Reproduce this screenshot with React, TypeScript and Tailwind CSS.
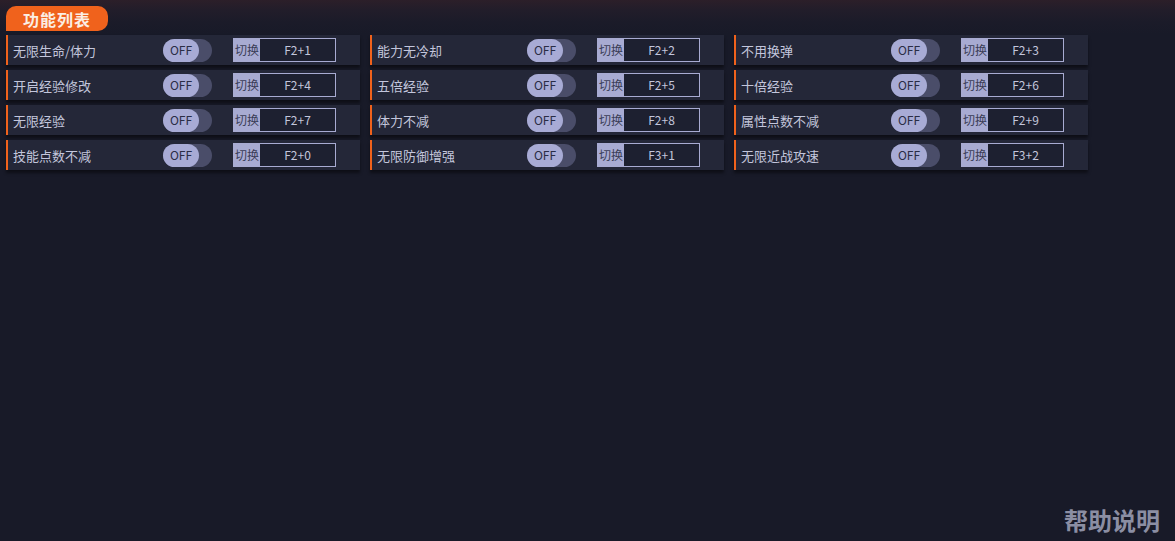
import React from "react";

const cheats = [
  { name: "无限生命/体力", key: "F2+1" },
  { name: "能力无冷却", key: "F2+2" },
  { name: "不用换弹", key: "F2+3" },
  { name: "开启经验修改", key: "F2+4" },
  { name: "五倍经验", key: "F2+5" },
  { name: "十倍经验", key: "F2+6" },
  { name: "无限经验", key: "F2+7" },
  { name: "体力不减", key: "F2+8" },
  { name: "属性点数不减", key: "F2+9" },
  { name: "技能点数不减", key: "F2+0" },
  { name: "无限防御增强", key: "F3+1" },
  { name: "无限近战攻速", key: "F3+2" },
];

const font = { fontFamily: '"Microsoft YaHei", "Noto Sans CJK SC", "Noto Sans", sans-serif' };

function CheatRow({ name, hotkey }: { name: string; hotkey: string }) {
  return (
    <div className="flex h-[30px] items-center border-l-2 border-[#f0621c] bg-[#242738] shadow-[0_3px_3px_rgba(0,0,0,0.45)]">
      <span className="w-[155px] pl-[5px] pt-[1px] text-[13px] text-[#c3c6dc]">{name}</span>
      {/* Toggle */}
      <div className="flex h-[23px] w-[49px] items-center rounded-full bg-[#4a4d69]">
        <div className="flex h-[23px] w-[36px] items-center justify-center rounded-full bg-[#a8abd5] text-[12px] text-[#2a2d45]">
          OFF
        </div>
      </div>
      {/* Hotkey */}
      <div className="ml-[21px] flex h-[24px] w-[103px] border border-[#a8abd2] bg-[#1d2030]">
        <span className="flex w-[26px] items-center justify-center bg-[#a8abd2] text-[12px] text-[#3a3d57]">
          切换
        </span>
        <span className="flex flex-1 items-center justify-center text-[12px] text-[#c3c6dc]">
          {hotkey}
        </span>
      </div>
    </div>
  );
}

export default function App() {
  return (
    <div
      className="flex h-[541px] w-[1175px] flex-col bg-[#181a28] bg-[linear-gradient(180deg,#2c1f29_0px,#221d2a_10px,#1b1b29_22px,#181a28_34px)]"
      style={font}
    >
      {/* Header tab */}
      <div className="flex pl-[6px] pt-[6px]">
        <div className="flex h-[25px] w-[102px] items-center justify-center rounded-tl-[10px] rounded-tr-[10px] rounded-br-[10px] bg-[#f0621c] text-[16px] font-bold tracking-[1px] text-[#fbeee4]">
          功能列表
        </div>
      </div>

      {/* Cheat grid */}
      <div className="mt-[4px] grid w-[1088px] grid-cols-3 gap-x-[10px] gap-y-[5px] pl-[6px]">
        {cheats.map((c) => (
          <CheatRow key={c.name} name={c.name} hotkey={c.key} />
        ))}
      </div>

      <div className="flex flex-1 items-end justify-end pb-[6px] pr-[15px]">
        <span className="text-[24px] font-bold leading-[30px] text-[#8b8ea3]">帮助说明</span>
      </div>
    </div>
  );
}
